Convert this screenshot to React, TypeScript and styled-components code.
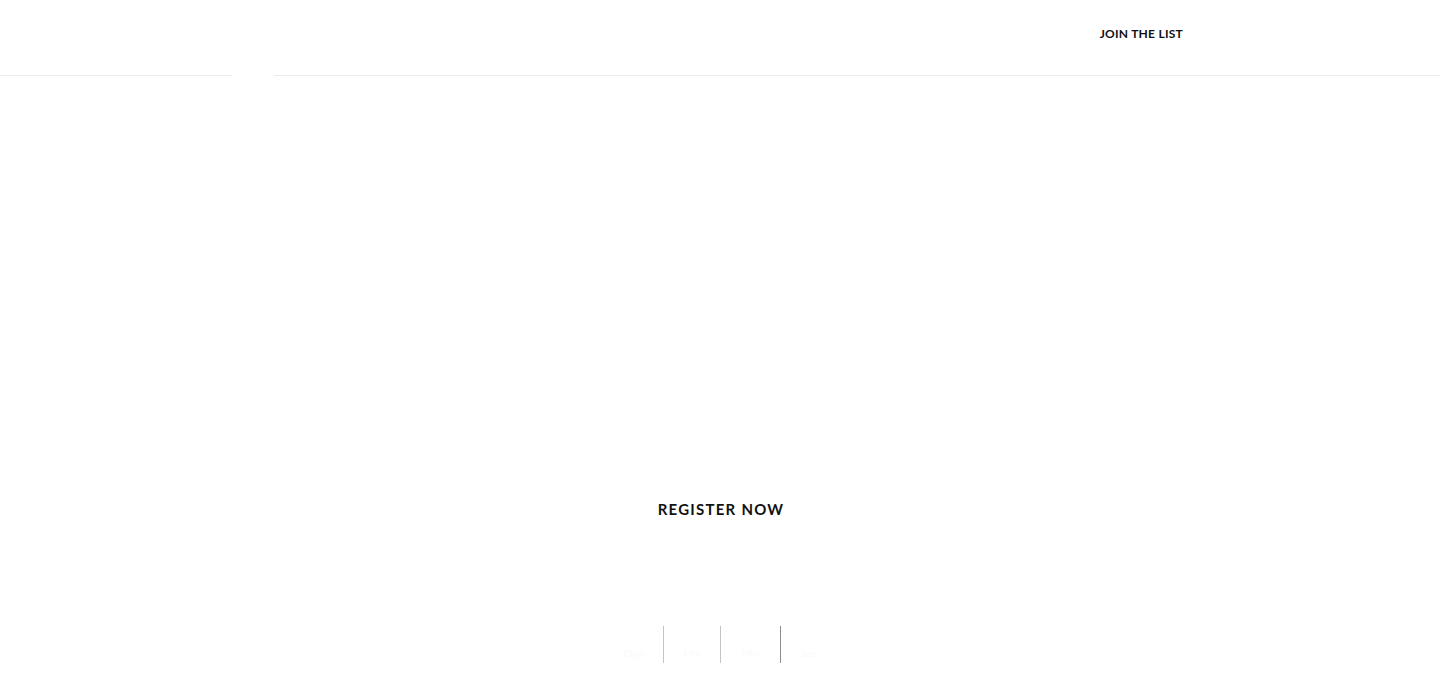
import React from "react";
import styled, { createGlobalStyle } from "styled-components";

const Global = createGlobalStyle`
  html, body { margin: 0; padding: 0; background: #fff; }
  body { font-family: "Lato", "Noto Sans", Arial, sans-serif; color: #111; }
`;

const Page = styled.div`
  width: 1440px;
  min-height: 697px;
  display: flex;
  flex-direction: column;
  overflow: hidden;
`;

const Header = styled.header`
  display: flex;
  flex-direction: column;
`;

const NavRow = styled.div`
  height: 75px;
  box-sizing: border-box;
  display: flex;
  align-items: flex-start;
  justify-content: flex-end;
  padding: 26px 257px 0 0;
`;

const NavLink = styled.a`
  font-family: "Lato", sans-serif;
  font-weight: 700;
  font-size: 12px;
  line-height: 15px;
  letter-spacing: 0.25px;
  color: #111;
  text-decoration: none;
  text-transform: uppercase;
  cursor: pointer;
`;

const Rule = styled.div`
  display: flex;
  height: 1px;
`;

const RuleLine = styled.div<{ $w?: number }>`
  height: 1px;
  background: #ececec;
  ${(p) => (p.$w ? `width: ${p.$w}px;` : "flex: 1;")}
`;

const LogoGap = styled.div`
  width: 42px;
  height: 1px;
`;

const Main = styled.main`
  display: flex;
  flex-direction: column;
  align-items: center;
  padding-top: 424px;
`;

const RegisterButton = styled.a`
  font-family: "Lato", sans-serif;
  font-weight: 700;
  font-size: 15px;
  line-height: 18px;
  letter-spacing: 1.25px;
  color: #111;
  text-transform: uppercase;
  cursor: pointer;
  padding-left: 2px;
`;

const Countdown = styled.div`
  margin-top: 108px;
  display: flex;
  padding-left: 2px;
`;

const Unit = styled.div<{ $line?: string }>`
  width: 57px;
  height: 37px;
  display: flex;
  align-items: flex-end;
  justify-content: center;
  border-left: ${(p) => (p.$line ? `1px solid ${p.$line}` : "1px solid transparent")};
  font-family: "Lato", sans-serif;
  font-size: 10px;
  color: #fafafa;
  padding-bottom: 4px;
  box-sizing: border-box;
`;

export default function App() {
  return (
    <Page>
      <Global />
      <Header>
        <NavRow>
          <NavLink>Join the list</NavLink>
        </NavRow>
        <Rule>
          <RuleLine $w={232} />
          <LogoGap />
          <RuleLine />
        </Rule>
      </Header>
      <Main>
        <RegisterButton>Register now</RegisterButton>
        <Countdown>
          <Unit>Days</Unit>
          <Unit $line="#c4c4c4">Hrs</Unit>
          <Unit $line="#c4c4c4" style={{ width: 60 }}>Min</Unit>
          <Unit $line="#8c8c8c">Sec</Unit>
        </Countdown>
      </Main>
    </Page>
  );
}
